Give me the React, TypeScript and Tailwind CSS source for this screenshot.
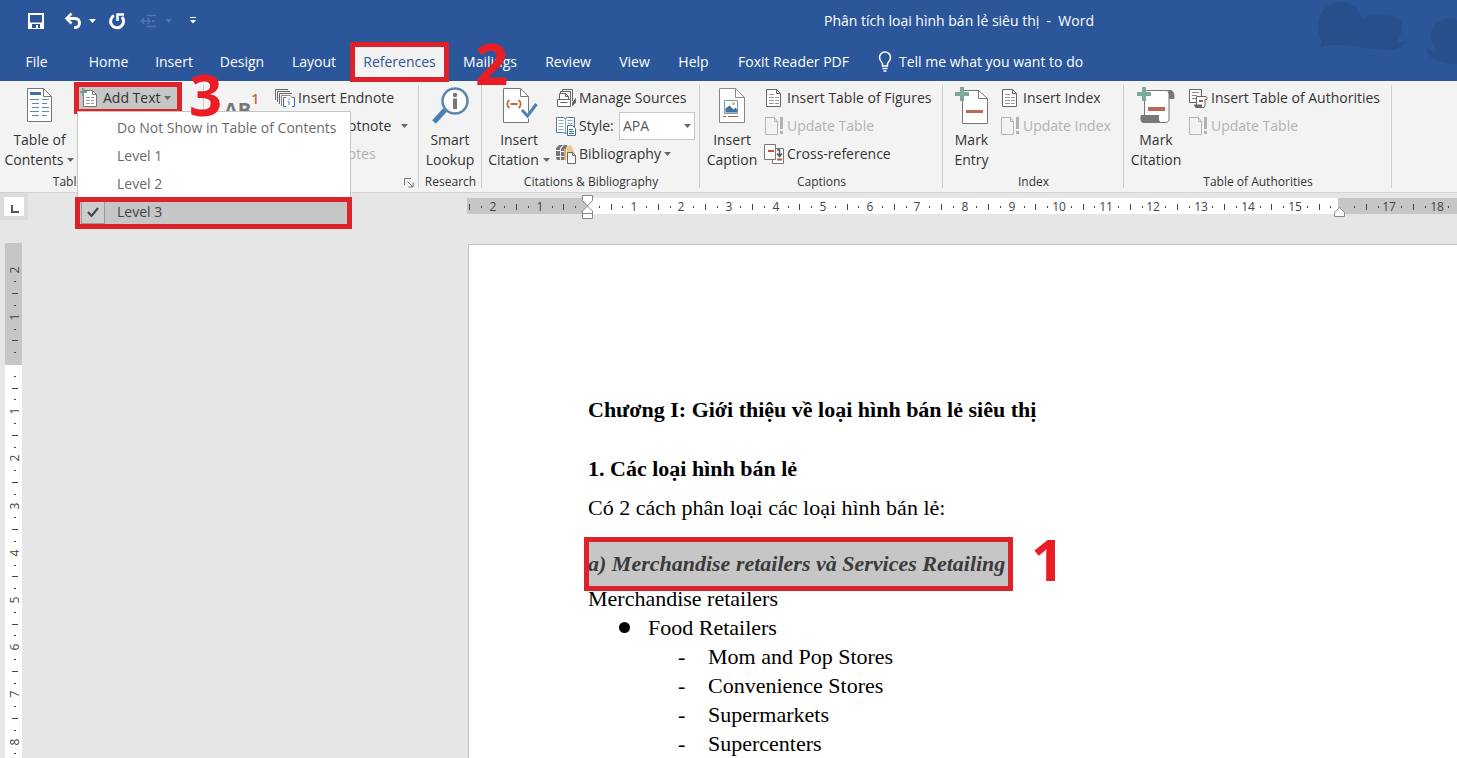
import type { ReactNode } from 'react';

type IconProps = { className?: string };

/* ---------- title bar icons ---------- */

const SaveIcon = () => (
  <svg width="18" height="18" viewBox="0 0 18 18" fill="none" stroke="#fff" strokeWidth="2">
    <path d="M2 2h14v14H2z" />
    <path d="M2 10.5h14v6H2z" fill="#fff" stroke="none" />
    <path d="M5 16v-4h8v4h-2v-3H9v3z" fill="#2b579a" stroke="none" />
  </svg>
);

const UndoIcon = () => (
  <svg width="19" height="18" viewBox="0 0 19 18" fill="none" stroke="#fff" strokeWidth="3">
    <path d="M2.5 6.5h9a4 4.5 0 0 1 0 9h-1.5" />
    <path d="M7.5 1.5l-5 5 5 5" strokeWidth="2.5" />
  </svg>
);

const RedoIcon = () => (
  <svg width="18" height="18" viewBox="0 0 18 18" fill="none" stroke="#fff" strokeWidth="3">
    <path d="M6 3.5a6.500 6.500 0 1 0 8 1.500" />
    <path d="M9.500 9V2.500H16" strokeWidth="2.500" />
  </svg>
);

const SpacingIcon = () => (
  <svg width="17" height="14" viewBox="0 0 17 14" fill="none" stroke="#4e76b3" strokeWidth="1.500">
    <path d="M7 1.500h9M12 7h3M7 12.500h9M1.500 7h8M4 4L1.500 7 4 10M7.500 4L10 7l-2.500 3" />
  </svg>
);

const Caret = ({ className = 'text-[#666]' }: IconProps) => (
  <svg className={className} width="7" height="4" viewBox="0 0 7 4" fill="currentColor">
    <path d="M0 0h7L3.500 4z" />
  </svg>
);

const MoreIcon = () => (
  <svg width="6" height="7" viewBox="0 0 6 7" fill="#fff">
    <path d="M0 0h6v1H0zM0 3h6L3 6.500z" />
  </svg>
);

const BulbIcon = () => (
  <svg width="14" height="21" viewBox="0 0 14 21" fill="none" stroke="#fff" strokeWidth="1.500">
    <path d="M4.500 15v-2.500C3 10.500 1.500 9 1.500 6.500a5.500 5.500 0 0 1 11 0c0 2.500-1.500 4-3 6V15z" />
    <path d="M4.500 17.500h5M5.500 20h3" />
  </svg>
);

/* ---------- ribbon icons ---------- */

const TocIcon = () => (
  <svg width="36" height="36" viewBox="0 0 36 36" fill="none">
    <path d="M5.500 1.500h16l8 8v25h-24z" fill="#fff" stroke="#777" />
    <path d="M21.500 1.500v8h8" stroke="#777" />
    <path d="M8 5h11v3H8z" fill="#41719c" />
    <path d="M8 12.500h9M10 16.500h7M10 20.500h7M8 24.500h9M10 28.500h7" stroke="#5b8bb0" />
    <path d="M20 12.500h7M20 16.500h5M20 20.500h7M20 24.500h7M20 28.500h5" stroke="#5b8bb0" />
  </svg>
);

const Plus = () => <path d="M7 0v14M0 7h14" stroke="#7fa898" strokeWidth="4" />;

const AddTextIcon = () => (
  <svg width="20" height="20" viewBox="0 0 20 20" fill="none">
    <path d="M3.500 2.500h9l4 4v12h-13z" fill="#fff" stroke="#777" />
    <path d="M12.500 2.500v4h4" stroke="#777" />
    <path d="M6 9.500h4M6 12.500h4M6 15.500h4M11 9.500h3M11 12.500h3M11 15.500h3" stroke="#999" />
    <path d="M3 0v8M-1 4h8" stroke="#6fa08e" strokeWidth="2" />
  </svg>
);

const EndnoteIcon = () => (
  <svg width="20" height="20" viewBox="0 0 20 20" fill="none">
    <path d="M.5 12V1.500H13M2.500 14V3.500H15M4.500 16V5.500H17" stroke="#666" />
    <path d="M6.500 18.500v-11h9l3 3v8z" fill="#fff" />
    <path d="M6.500 18V7.500H15l3 2.500" stroke="#888" />
    <path d="M11 9.500H8.500v9H11M17 9.500h2.500v9H17M14 13v4M14 10.500V12" stroke="#3f6f9f" />
  </svg>
);

const LookupIcon = () => (
  <svg width="38" height="38" viewBox="0 0 38 38" fill="none">
    <path d="M14 23L3 35" stroke="#4a7fb5" strokeWidth="5" />
    <circle cx="24" cy="14" r="12.500" fill="#fff" stroke="#5a86ae" strokeWidth="2.500" />
    <path d="M22 11.500h4V22h-4z" fill="#777" />
    <circle cx="24" cy="8" r="2.200" fill="#777" />
  </svg>
);

const CitationIcon = () => (
  <svg width="38" height="37" viewBox="0 0 38 37" fill="none">
    <path d="M3.500 1.500h17l8 8v26h-25z" fill="#fff" stroke="#777" />
    <path d="M20.500 1.500v8h8" stroke="#777" />
    <path d="M9.500 13c-3 2-3 6 0 8M18.500 13c3 2 3 6 0 8M10.500 17h7" stroke="#c8643c" strokeWidth="1.800" />
    <path d="M20 24h3l4 3 5-7 5-4v7l-9 9z" fill="#f3f3f3" />
    <path d="M22 23l5.500 6L36.500 17" stroke="#4a7fb5" strokeWidth="3" />
  </svg>
);

const SourcesIcon = () => (
  <svg width="20" height="20" viewBox="0 0 20 20" fill="none" stroke="#666">
    <path d="M6.500 4V1.500h10V13M4.500 6V3.500h10V11" />
    <path d="M3.500 12V5.500h6l3 3V12" fill="#fff" />
    <path d="M9.500 5.500v3h3" />
    <path d="M1.500 11.500h13v7h-13z" fill="#fff" />
    <path d="M4.500 14.500h7" />
    <path d="M16 18.500v-4l4-5v5z" fill="#666" stroke="none" />
  </svg>
);

const StyleIcon = () => (
  <svg width="20" height="20" viewBox="0 0 20 20" fill="none">
    <path d="M9.500 2.500L7.500 1.500h-7v15h7l2 1 2-1h7v-15h-7z" fill="#fff" stroke="#54799e" />
    <path d="M9.500 2.500v15M2.500 4.500h5M2.500 7.500h5M2.500 10.500h5M2.500 13.500h5M11.500 4.500h5M11.500 7.500h5" stroke="#8fa9c2" />
    <path d="M11.500 9.500h5l3 3v7h-8z" fill="#fff" stroke="#41719c" />
    <path d="M13 13.500h4M13 15.500h5M13 17.500h5" stroke="#41719c" />
  </svg>
);

const BiblioIcon = () => (
  <svg width="20" height="20" viewBox="0 0 20 20" fill="none">
    <path d="M0 4l3-3h4L4 4v12H1L0 14zM5 5l3-4h3v3L9 6v10H5z" fill="#777" />
    <path d="M0 6.500h4M0 12.500h4M5 7.500h4M5 12.500h4" stroke="#fff" />
    <path d="M10 3l5-2 4 9v6h-8z" fill="#e9c98c" />
    <path d="M8 5h2v11H8z" fill="#dcb06a" />
    <path d="M11.500 8.500h5l3 3v8h-8z" fill="#fff" stroke="#666" />
    <path d="M16.500 8.500v3h3" stroke="#666" />
  </svg>
);

const CaptionIcon = () => (
  <svg width="28" height="37" viewBox="0 0 28 37" fill="none">
    <path d="M1.500 1.500h16l9 9v25h-25z" fill="#fff" stroke="#888" />
    <path d="M17.500 1.500v9h9" stroke="#888" />
    <path d="M6.500 13.500h13v13h-13z" stroke="#7b96ac" />
    <path d="M7.500 25.500v-4l4-3 4 4 2-2 1.500 2v3z" fill="#41719c" />
    <circle cx="15.500" cy="16.500" r="1.500" fill="#d9b36c" />
    <path d="M5 29.500h3M10 29.500h10" stroke="#b5573a" />
  </svg>
);

const TableDocIcon = () => (
  <svg width="20" height="20" viewBox="0 0 20 20" fill="none">
    <path d="M2.500 1.500h10l4 4v13h-14z" fill="#fff" stroke="#666" />
    <path d="M12.500 1.500v4h4" stroke="#666" />
    <path d="M5 6.500h5M5 9.500h5M5 12.500h5M5 15.500h5M11 9.500h4M11 12.500h4M11 15.500h4" stroke="#999" />
  </svg>
);

const UpdateIcon = () => (
  <svg width="20" height="20" viewBox="0 0 20 20" fill="none">
    <path d="M1.500 1.500h9l3 4v13h-12z" fill="#f5f0f5" stroke="#b5b5b5" />
    <path d="M10.500 1.500v4h3" stroke="#b5b5b5" />
    <path d="M16 1h3v12h-3zM16 15h3v3h-3z" fill="#b5b0b5" />
  </svg>
);

const CrossRefIcon = () => (
  <svg width="20" height="20" viewBox="0 0 20 20" fill="none">
    <path d="M8.500 4.500h11v15h-11z" fill="#fff" stroke="#777" />
    <path d="M.5 .5h11v15H.5z" fill="#fff" stroke="#777" />
    <path d="M4 7h6M13 15.500h5" stroke="#b5573a" strokeWidth="2" />
    <path d="M13 6h2.500v6M13 9.500l2.500 3 2.500-3" stroke="#555" strokeWidth="1.500" />
  </svg>
);

const MarkEntryIcon = () => (
  <svg width="34" height="38" viewBox="0 0 34 38" fill="none">
    <path d="M7.500 3.500h16l9 8v25h-25z" fill="#fff" stroke="#777" />
    <path d="M23.500 3.500v8h9" stroke="#777" />
    <path d="M11 24.500h17" stroke="#b86a55" strokeWidth="3" />
    <Plus />
  </svg>
);

const MarkCitationIcon = () => (
  <svg width="38" height="38" viewBox="0 0 38 38" fill="none">
    <path d="M28 3.500h5c3 0 4 2 4 8h-5" fill="#777" stroke="#777" />
    <path d="M7.500 30V3.500H29c2 0 3 2 3 4v24c0 3-1 4-4 4H10" fill="#fff" stroke="#777" />
    <path d="M4 28h18v5c1 2 2 2 4 3H6c-3-1-3-5-2-8z" fill="#777" />
    <path d="M11 22h17" stroke="#b86a55" strokeWidth="4" />
    <Plus />
  </svg>
);

const AuthoritiesIcon = () => (
  <svg width="20" height="20" viewBox="0 0 20 20" fill="none">
    <path d="M1.500 1.500h12v13h-12z" fill="#fff" stroke="#666" />
    <path d="M4 4.500h7M4 7.500h5M4 10.500h4" stroke="#888" />
    <path d="M8.500 17V8.500h8.500c2 0 2 1 2 3h-2v6l-1 2H8z" fill="#fff" stroke="#666" />
    <path d="M6 16.500h8v3H7z" fill="#666" />
    <path d="M11 13h4" stroke="#b5573a" strokeWidth="2" />
  </svg>
);

const LauncherIcon = () => (
  <svg width="10" height="10" viewBox="0 0 10 10" fill="none" stroke="#777">
    <path d="M.5 7V.5H7M3.500 3.500l5 5M9 4.500V9H4.500" />
  </svg>
);

/* ---------- ribbon building blocks ---------- */

const Group = ({
  label,
  width,
  launcher,
  children,
}: {
  label: string;
  width: string;
  launcher?: boolean;
  children: ReactNode;
}) => (
  <section aria-label={label} className={`relative flex shrink-0 flex-col ${width}`}>
    <div className="flex h-[92px] items-start">{children}</div>
    <div className="text-center text-xs leading-5 text-[#333]">{label}</div>
    {launcher ? (
      <button type="button" aria-label="More options" className="absolute right-[5px] bottom-1">
        <LauncherIcon />
      </button>
    ) : null}
    <span className="absolute top-1 right-0 h-[103px] w-px bg-[#d0d0d0]" />
  </section>
);

const BigButton = ({
  icon,
  lines,
  caret,
  width,
}: {
  icon: ReactNode;
  lines: [string, string];
  caret?: boolean;
  width: string;
}) => (
  <button type="button" className={`flex shrink-0 flex-col items-center pt-[6px] ${width}`}>
    <span className="flex h-[43px] items-start">{icon}</span>
    <span className="leading-5 whitespace-nowrap">{lines[0]}</span>
    <span className="flex items-center gap-1 leading-5 whitespace-nowrap">
      {lines[1]}
      {caret ? <Caret /> : null}
    </span>
  </button>
);

const SmallButton = ({
  icon,
  text,
  caret,
  disabled,
}: {
  icon?: ReactNode;
  text: string;
  caret?: boolean;
  disabled?: boolean;
}) => (
  <button
    type="button"
    disabled={disabled}
    className="flex h-7 items-center gap-[3px] whitespace-nowrap disabled:text-[#b1b1b1]"
  >
    <span className="w-5">{icon}</span>
    {text}
    {caret ? <Caret /> : null}
  </button>
);

const Stack = ({ children }: { children: ReactNode }) => (
  <div className="flex flex-col items-start pt-[3px]">{children}</div>
);

const levels = ['Do Not Show in Table of Contents', 'Level 1', 'Level 2', 'Level 3'];

const LevelMenu = () => (
  <div
    role="menu"
    className="absolute top-6 left-[-2px] z-20 w-[274px] border border-[#c6c6c6] bg-white py-[2px] text-[#6a6a6a]"
  >
    {levels.map((level) => {
      const checked = level === 'Level 3';
      return (
        <button
          key={level}
          type="button"
          role="menuitemradio"
          aria-checked={checked}
          className={`relative flex h-7 w-full items-center whitespace-nowrap ${
            checked ? 'bg-[#c6c6c6] text-[#444]' : ''
          }`}
        >
          <span className="flex w-[39px] pl-[3px]">
            {checked ? (
              <span className="flex h-6 w-6 items-center justify-center border border-[#999] bg-[#cdcdcd]">
                <svg width="12" height="10" viewBox="0 0 12 10" fill="none" stroke="#444" strokeWidth="2">
                  <path d="M1 5l3.500 4L11 1" />
                </svg>
              </span>
            ) : null}
          </span>
          {level}
          {checked ? (
            <span className="absolute -top-px -right-[2px] -bottom-[3px] -left-[3px] border-5 border-[#dd222a]" />
          ) : null}
        </button>
      );
    })}
  </div>
);

const Ribbon = () => (
  <div className="flex h-[112px] border-b border-[#d2d2d2] bg-[#f3f3f3] text-sm text-[#333]">
    <Group label="Table of Contents" width="w-[204px]">
      <BigButton icon={<TocIcon />} lines={['Table of', 'Contents']} caret width="w-[79px]" />
      <div className="relative pt-[6px]">
        <div className="relative">
          <button
            type="button"
            aria-haspopup="menu"
            className="flex h-[22px] w-[98px] items-center gap-[3px] bg-[#c6c6c6] pl-px whitespace-nowrap"
          >
            <AddTextIcon />
            Add Text
            <Caret />
          </button>
          <span className="pointer-events-none absolute -inset-[5px] border-5 border-[#dd222a]" />
          <LevelMenu />
          <Mark n="3" place="-top-[33px] left-[110px]" />
        </div>
      </div>
    </Group>

    <Group label="Footnotes" width="w-[215px]" launcher>
      <button type="button" aria-label="Insert Footnote" className="flex w-[71px] shrink-0 items-start pt-2 pl-5">
        <span className="pt-[7px] text-xl font-bold text-[#777]">AB</span>
        <span className="text-sm font-semibold text-[#c8643c]">1</span>
      </button>
      <Stack>
        <SmallButton icon={<EndnoteIcon />} text="Insert Endnote" />
        <div className="flex items-center gap-[10px]">
          <SmallButton text="Next Footnote" />
          <Caret />
        </div>
        <SmallButton text="Show Notes" disabled />
      </Stack>
    </Group>

    <Group label="Research" width="w-[63px]">
      <BigButton icon={<LookupIcon />} lines={['Smart', 'Lookup']} width="w-[62px]" />
    </Group>

    <Group label="Citations & Bibliography" width="w-[218px]">
      <BigButton icon={<CitationIcon />} lines={['Insert', 'Citation']} caret width="w-[74px]" />
      <Stack>
        <SmallButton icon={<SourcesIcon />} text="Manage Sources" />
        <div className="flex h-7 items-center gap-[3px]">
          <StyleIcon />
          <label htmlFor="cite-style" className="w-[37px] whitespace-nowrap">
            Style:
          </label>
          <div className="relative">
            <select
              id="cite-style"
              className="h-7 w-[76px] appearance-none border border-[#c6c6c6] bg-white pl-[3px] text-[#555]"
            >
              <option>APA</option>
            </select>
            <Caret className="pointer-events-none absolute top-3 right-1 text-[#666]" />
          </div>
        </div>
        <SmallButton icon={<BiblioIcon />} text="Bibliography" caret />
      </Stack>
    </Group>

    <Group label="Captions" width="w-[243px]">
      <BigButton icon={<CaptionIcon />} lines={['Insert', 'Caption']} width="w-[64px]" />
      <Stack>
        <SmallButton icon={<TableDocIcon />} text="Insert Table of Figures" />
        <SmallButton icon={<UpdateIcon />} text="Update Table" disabled />
        <SmallButton icon={<CrossRefIcon />} text="Cross-reference" />
      </Stack>
    </Group>

    <Group label="Index" width="w-[181px]">
      <BigButton icon={<MarkEntryIcon />} lines={['Mark', 'Entry']} width="w-[57px]" />
      <Stack>
        <SmallButton icon={<TableDocIcon />} text="Insert Index" />
        <SmallButton icon={<UpdateIcon />} text="Update Index" disabled />
      </Stack>
    </Group>

    <Group label="Table of Authorities" width="w-[268px]">
      <BigButton icon={<MarkCitationIcon />} lines={['Mark', 'Citation']} width="w-[64px]" />
      <Stack>
        <SmallButton icon={<AuthoritiesIcon />} text="Insert Table of Authorities" />
        <SmallButton icon={<UpdateIcon />} text="Update Table" disabled />
      </Stack>
    </Group>
  </div>
);

/* numbered callouts drawn over the window */
const Mark = ({ n, place }: { n: string; place: string }) => (
  <span
    className={`pointer-events-none absolute z-30 text-[58px] leading-[80px] font-bold text-[#ea1c24] ${place}`}
  >
    {n}
  </span>
);

/* ---------- header ---------- */

const tabs = [
  { name: 'File', width: 'w-[75px]' },
  { name: 'Home', width: 'w-[67px]' },
  { name: 'Insert', width: 'w-[64px]' },
  { name: 'Design', width: 'w-[72px]' },
  { name: 'Layout', width: 'w-[72px]' },
  { name: 'References', width: 'w-[99px]' },
  { name: 'Mailings', width: 'w-[82px]' },
  { name: 'Review', width: 'w-[74px]' },
  { name: 'View', width: 'w-[59px]' },
  { name: 'Help', width: 'w-[59px]' },
  { name: 'Foxit Reader PDF', width: 'w-[141px]' },
];

const Header = () => (
  <header className="relative h-[81px] bg-[#2b579a] text-sm text-white">
    <svg className="absolute top-0 right-0" width="150" height="66" viewBox="0 0 150 66" fill="#264f8c">
      <path d="M12 48c4-6 2-9 0-14C8 14 20 2 34 2c10 0 18 6 21 16 10-5 40-6 40 8 0 8-4 12-4 16h9c-8 9-20 9-34 7-18-2-38-8-54-1z" />
      <path d="M150 20c-12-5-26 2-26 16 0 8 4 12 5 16l-10-4c0 10 14 16 31 16z" />
    </svg>
    <div className="relative flex h-[41px] items-center">
      <div className="flex w-[461px] items-center pl-[27px]">
        <button type="button" aria-label="Save"><SaveIcon /></button>
        <button type="button" aria-label="Undo" className="ml-[19px]"><UndoIcon /></button>
        <button type="button" aria-label="Undo list" className="ml-[6px]"><Caret className="text-white" /></button>
        <button type="button" aria-label="Repeat" className="ml-3"><RedoIcon /></button>
        <button type="button" aria-label="Spacing" disabled className="ml-[14px]"><SpacingIcon /></button>
        <button type="button" aria-label="Spacing list" disabled className="ml-2"><Caret className="text-[#4e76b3]" /></button>
        <button type="button" aria-label="Customize" className="ml-[18px]"><MoreIcon /></button>
      </div>
      <h1 className="flex-1 text-center whitespace-pre">Phân tích loại hình bán lẻ siêu thị  -  Word</h1>
    </div>
    <nav className="relative flex h-[41px] items-center">
      {tabs.map((tab) =>
        tab.name === 'References' ? (
          <button
            key={tab.name}
            type="button"
            className={`relative z-10 h-10 shrink-0 border-5 border-[#dd222a] bg-[#f3f3f3] text-[#2b579a] ${tab.width}`}
          >
            {tab.name}
          </button>
        ) : (
          <button
            key={tab.name}
            type="button"
            className={`shrink-0 whitespace-nowrap ${tab.width} ${tab.name === 'File' ? 'pr-[2px]' : ''}`}
          >
            {tab.name}
          </button>
        ),
      )}
      <button type="button" className="ml-[14px] flex items-center gap-[7px] whitespace-nowrap">
        <BulbIcon />
        Tell me what you want to do
      </button>
      <Mark n="2" place="-top-[18px] left-[475px]" />
    </nav>
  </header>
);

/* ---------- rulers ---------- */

const CM = 47.2;

// quarter-centimetre marks; k counts quarters from the margin
const quarters = (from: number, to: number) => Array.from({ length: to - from + 1 }, (_, i) => from + i);

const HorizontalRuler = () => (
  <svg className="h-[26px] w-full" fill="#444">
    <rect x="0" y="5" width="100%" height="16" fill="#c6c6c6" />
    <rect x="120" y="5" width="751" height="16" fill="#fff" />
    {quarters(-10, 75).map((k) => {
      const x = Math.round(120 + (k * CM) / 4);
      if (k === 0 || k === 64) return null;
      if (k % 4 === 0) {
        return (
          <text key={k} x={x} y="18" fontSize="12" textAnchor="middle">
            {Math.abs(k / 4)}
          </text>
        );
      }
      return k % 2 === 0 ? (
        <rect key={k} x={x} y="11" width="1" height="6" />
      ) : (
        <rect key={k} x={x} y="13" width="1" height="2" />
      );
    })}
    <g fill="#fff" stroke="#888">
      <path d="M115.500 2.500h10v5l-5 5.500-5-5.500z" />
      <path d="M115.500 24.500V18l5-5 5 5v6.500z" />
      <path d="M115.500 20.500h10v5h-10z" />
      <path d="M867.500 23.500v-4l5-5 5 5v4z" />
    </g>
  </svg>
);

const VerticalRuler = () => (
  <svg className="h-full w-[17px] shrink-0" fill="#444">
    <rect width="17" height="100%" fill="#fff" />
    <rect width="17" height="122" fill="#c6c6c6" />
    {quarters(-8, 43).map((k) => {
      const y = Math.round(121 + (k * CM) / 4);
      if (k === 0) return null;
      if (k % 4 === 0) {
        return (
          <text key={k} transform={`translate(14 ${y}) rotate(-90)`} fontSize="12" textAnchor="middle">
            {Math.abs(k / 4)}
          </text>
        );
      }
      return k % 2 === 0 ? (
        <rect key={k} x="7" y={y} width="6" height="1" />
      ) : (
        <rect key={k} x="9" y={y} width="2" height="1" />
      );
    })}
  </svg>
);

/* ---------- document ---------- */

const foodRetailers = ['Mom and Pop Stores', 'Convenience Stores', 'Supermarkets', 'Supercenters'];

const Page = () => (
  <article className="mt-px ml-[446px] flex-1 border-t border-l border-[#c0c0c0] bg-white pt-[150px] pl-[119px] font-['Liberation_Serif',serif] text-[22px] leading-[29px] whitespace-nowrap text-black">
    <h2 className="font-bold">Chương I: Giới thiệu về loại hình bán lẻ siêu thị</h2>
    <h3 className="mt-[30px] font-bold">1. Các loại hình bán lẻ</h3>
    <p className="mt-[10px]">Có 2 cách phân loại các loại hình bán lẻ:</p>
    <h4 className="relative mt-5 w-fit bg-[#c6c6c6] pt-[6px] pr-[3px] pb-2 font-bold text-[#3b3b3b] italic">
      a) Merchandise retailers và Services Retailing
      <span className="absolute -inset-y-[5px] -right-[5px] -left-1 z-10 border-5 border-[#dd222a]" />
      <span className="font-['Open_Sans',sans-serif] not-italic">
        <Mark n="1" place="-top-[23px] left-[443px]" />
      </span>
    </h4>
    <p className="-mt-[2px]">Merchandise retailers</p>
    <ul>
      <li>
        <div className="flex items-center">
          <span className="flex w-[60px] pl-[31px]">
            <span className="h-[11px] w-[11px] rounded-full bg-black" />
          </span>
          Food Retailers
        </div>
        <ul>
          {foodRetailers.map((item) => (
            <li key={item} className="flex pl-[90px]">
              <span className="w-[30px]">-</span>
              {item}
            </li>
          ))}
        </ul>
      </li>
    </ul>
  </article>
);

export default function App() {
  return (
    <div className="flex h-screen flex-col overflow-hidden bg-[#e6e6e6] font-['Open_Sans',sans-serif]">
      <Header />
      <Ribbon />
      <div className="flex h-[50px] shrink-0 items-start">
        <div className="h-[27px] w-7 shrink-0 border-4 border-[#dcdcdc] bg-white">
          <svg width="20" height="19" viewBox="0 0 20 19" fill="none" stroke="#555" strokeWidth="2">
            <path d="M8 8v7h7" />
          </svg>
        </div>
        <div className="ml-[439px] flex-1">
          <HorizontalRuler />
        </div>
      </div>
      <div className="flex min-h-0 flex-1 pl-[5px]">
        <VerticalRuler />
        <Page />
      </div>
    </div>
  );
}
